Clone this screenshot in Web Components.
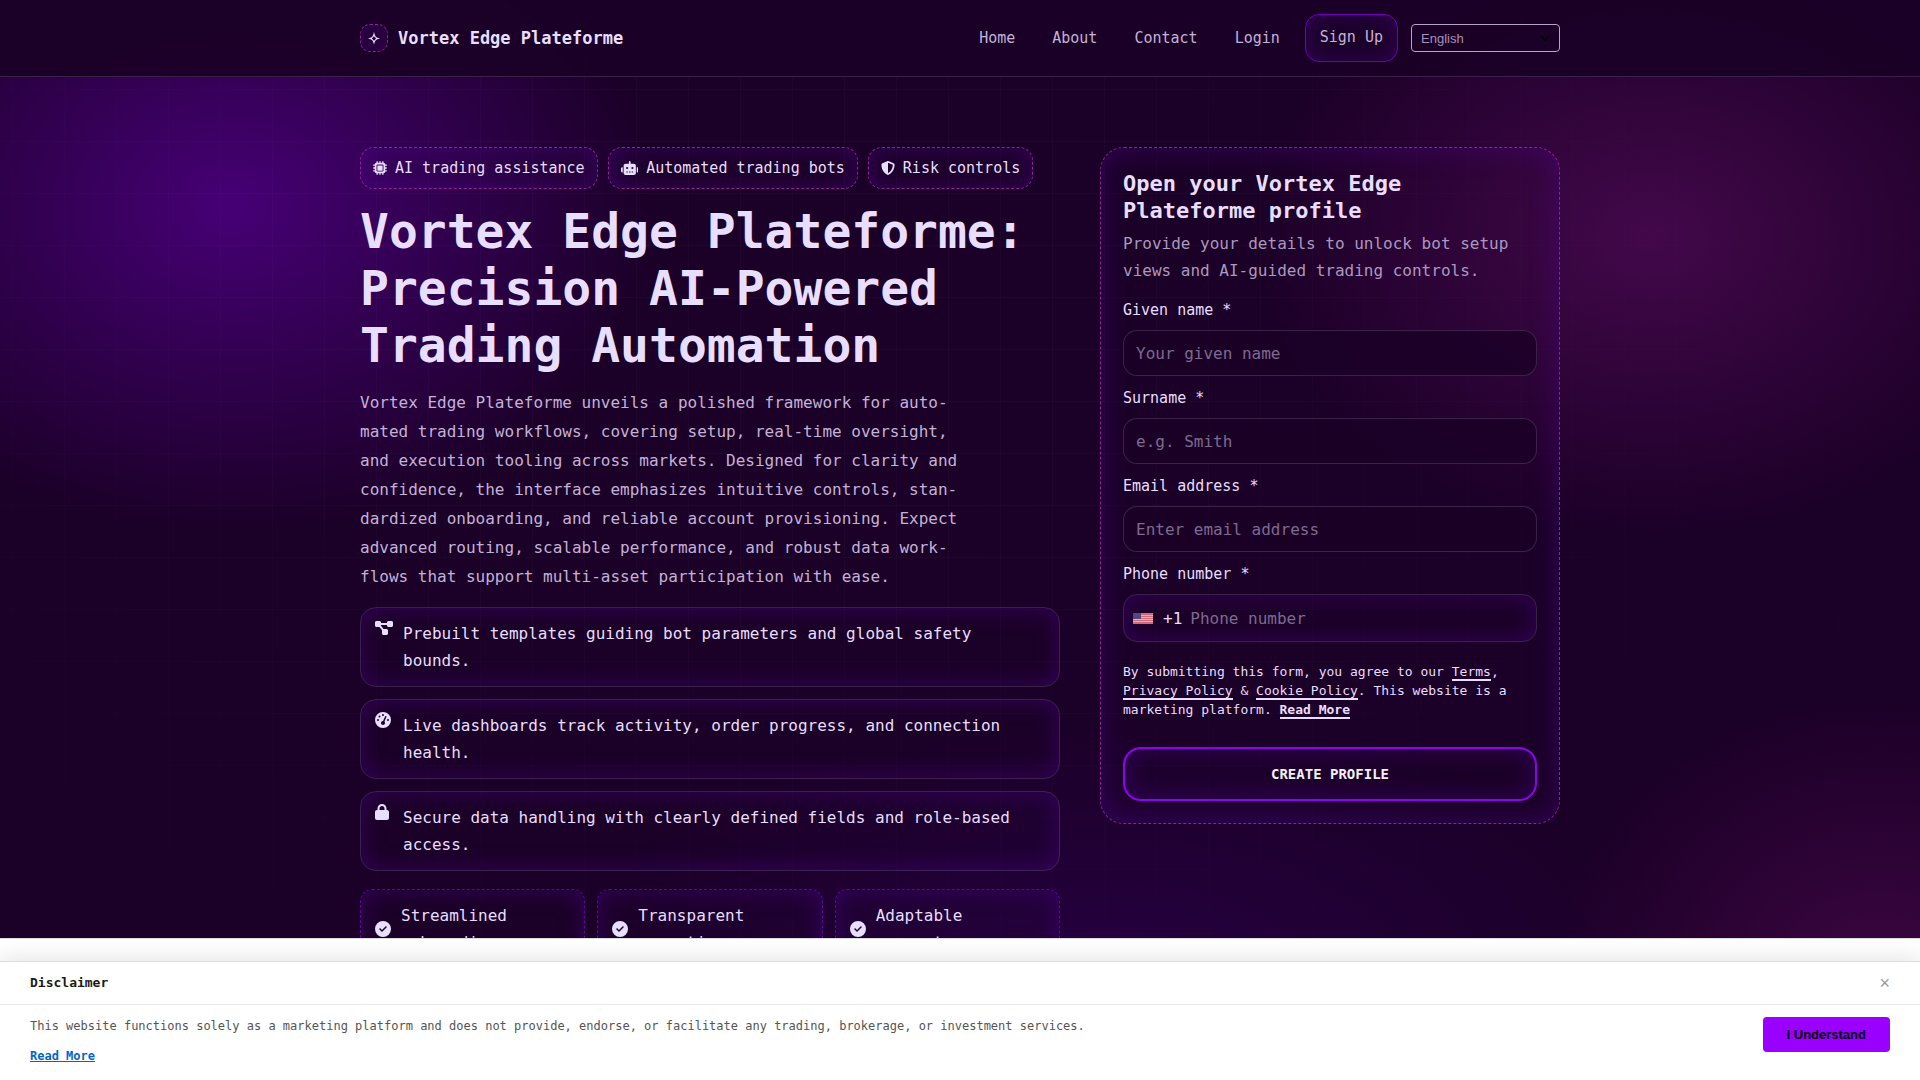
<!DOCTYPE html>
<html lang="en">
<head>
<meta charset="utf-8">
<meta name="viewport" content="width=device-width, initial-scale=1">
<title>Vortex Edge Plateforme</title>
<style>
  :root {
    --ink: #e8deff;
    --muted: #c3b2d8;
    --soft: #ab98bf;
    --hint: #7d6a90;
    --line: rgba(232, 222, 255, 0.15);
    --pink: #96209a;
    --violet: #9900ff;
    --base: #1b0027;
    --glow: inset 0 0 24px rgba(84, 0, 160, 0.42);
    --mono: "DejaVu Sans Mono", monospace;
    --sans: "Liberation Sans", Arial, sans-serif;
  }
  body {
    margin: 0;
    min-height: 100vh;
    overflow: hidden;
    color: var(--ink);
    font: 16px/27px var(--mono);
    background:
      radial-gradient(430px 330px at 12% 19%, rgba(80, 0, 135, 0.82), transparent),
      radial-gradient(400px 300px at 86% 22%, rgba(78, 10, 84, 0.78), transparent),
      radial-gradient(340px 300px at 98% 92%, rgba(74, 8, 76, 0.72), transparent),
      radial-gradient(560px 260px at 58% 90%, rgba(52, 0, 98, 0.42), transparent),
      var(--base);
  }
  /* faint grid that fades out towards the edges */
  body::before {
    content: "";
    position: absolute;
    inset: 0;
    z-index: -1;
    background:
      linear-gradient(90deg, rgba(200, 160, 255, 0.03) 1px, transparent 1px) 12px 0 / 52px 52px,
      linear-gradient(rgba(200, 160, 255, 0.03) 1px, transparent 1px) 0 37px / 52px 52px;
    mask-image: radial-gradient(ellipse at 40% 30%, #000 20%, transparent 75%);
  }
</style>
</head>
<body>

<site-header>
  <nav-link href="#home">Home</nav-link>
  <nav-link href="#about">About</nav-link>
  <nav-link href="#contact">Contact</nav-link>
  <nav-link href="#login">Login</nav-link>
  <nav-link href="#signup" outlined>Sign Up</nav-link>
</site-header>

<hero-section>
  <info-chip slot="chips" icon="chip">AI trading assistance</info-chip>
  <info-chip slot="chips" icon="robot">Automated trading bots</info-chip>
  <info-chip slot="chips" icon="shield">Risk controls</info-chip>

  <span slot="title">Vortex Edge Plateforme: Precision AI-Powered Trading Automation</span>
  <span slot="lead">Vortex Edge Plateforme unveils a polished framework for auto&shy;mated trading workflows, covering setup, real-time oversight, and execution tooling across markets. Designed for clarity and confidence, the interface emphasizes intuitive controls, stan&shy;dardized onboarding, and reliable account provisioning. Expect advanced routing, scalable performance, and robust data work&shy;flows that support multi-asset participation with ease.</span>

  <feature-item slot="features" icon="diagram">Prebuilt templates guiding bot parameters and global safety bounds.</feature-item>
  <feature-item slot="features" icon="gauge">Live dashboards track activity, order progress, and connection health.</feature-item>
  <feature-item slot="features" icon="lock">Secure data handling with clearly defined fields and role-based access.</feature-item>

  <check-tile slot="tiles">Streamlined onboarding</check-tile>
  <check-tile slot="tiles">Transparent operations</check-tile>
  <check-tile slot="tiles">Adaptable parameters</check-tile>

  <profile-form slot="form">
    <form-field label="Given name *" placeholder="Your given name"></form-field>
    <form-field label="Surname *" placeholder="e.g. Smith"></form-field>
    <form-field label="Email address *" type="email" placeholder="Enter email address"></form-field>
    <form-field label="Phone number *" type="tel" placeholder="Phone number" prefix="+1"></form-field>
  </profile-form>
</hero-section>

<disclaimer-bar>
  This website functions solely as a marketing platform and does not provide, endorse, or facilitate any trading, brokerage, or investment services.
</disclaimer-bar>

<script>
const icons = {
  chip: [512, "M176 24c0-13.3-10.7-24-24-24s-24 10.7-24 24V64c-35.3 0-64 28.7-64 64H24c-13.3 0-24 10.7-24 24s10.7 24 24 24H64v56H24c-13.3 0-24 10.7-24 24s10.7 24 24 24H64v56H24c-13.3 0-24 10.7-24 24s10.7 24 24 24H64c0 35.3 28.7 64 64 64v40c0 13.3 10.7 24 24 24s24-10.7 24-24V448h56v40c0 13.3 10.7 24 24 24s24-10.7 24-24V448h56v40c0 13.3 10.7 24 24 24s24-10.7 24-24V448c35.3 0 64-28.7 64-64h40c13.3 0 24-10.7 24-24s-10.7-24-24-24H448V280h40c13.3 0 24-10.7 24-24s-10.7-24-24-24H448V176h40c13.3 0 24-10.7 24-24s-10.7-24-24-24H448c0-35.3-28.7-64-64-64V24c0-13.3-10.7-24-24-24s-24 10.7-24 24V64H280V24c0-13.3-10.7-24-24-24s-24 10.7-24 24V64H176V24zM160 128H352c17.7 0 32 14.3 32 32V352c0 17.7-14.3 32-32 32H160c-17.7 0-32-14.3-32-32V160c0-17.7 14.3-32 32-32zm192 32H160V352H352V160z"],
  robot: [640, "M320 0c17.7 0 32 14.3 32 32V96H472c39.8 0 72 32.2 72 72V440c0 39.8-32.2 72-72 72H168c-39.8 0-72-32.2-72-72V168c0-39.8 32.2-72 72-72H288V32c0-17.7 14.3-32 32-32zM208 384c-8.8 0-16 7.2-16 16s7.2 16 16 16h32c8.8 0 16-7.2 16-16s-7.2-16-16-16H208zm96 0c-8.8 0-16 7.2-16 16s7.2 16 16 16h32c8.8 0 16-7.2 16-16s-7.2-16-16-16H304zm96 0c-8.8 0-16 7.2-16 16s7.2 16 16 16h32c8.8 0 16-7.2 16-16s-7.2-16-16-16H400zM264 256a40 40 0 1 0 -80 0 40 40 0 1 0 80 0zm152 40a40 40 0 1 0 0-80 40 40 0 1 0 0 80zM48 224H64V416H48c-26.5 0-48-21.5-48-48V272c0-26.5 21.5-48 48-48zm544 0c26.5 0 48 21.5 48 48v96c0 26.5-21.5 48-48 48H576V224h16z"],
  shield: [512, "M256 0c4.6 0 9.2 1 13.4 2.9L457.7 82.8c22 9.3 38.4 31 38.3 57.2c-.5 99.2-41.3 280.7-213.6 363.2c-16.7 8-36.1 8-52.8 0C57.3 420.7 16.5 239.2 16 140c-.1-26.2 16.3-47.9 38.3-57.2L242.7 2.9C246.8 1 251.4 0 256 0zm0 66.8V444.8C394 378 431.1 230.1 432 141.4L256 66.8z"],
  diagram: [576, "M0 80C0 53.5 21.5 32 48 32h96c26.5 0 48 21.5 48 48V96H384V80c0-26.5 21.5-48 48-48h96c26.5 0 48 21.5 48 48v96c0 26.5-21.5 48-48 48H432c-26.5 0-48-21.5-48-48V160H192v16c0 1.7-.1 3.4-.3 5L272 288h96c26.5 0 48 21.5 48 48v96c0 26.5-21.5 48-48 48H272c-26.5 0-48-21.5-48-48V336c0-1.7 .1-3.4 .3-5L144 224H48c-26.5 0-48-21.5-48-48V80z"],
  gauge: [512, "M0 256a256 256 0 1 1 512 0A256 256 0 1 1 0 256zM288 96a32 32 0 1 0 -64 0 32 32 0 1 0 64 0zM256 416c35.3 0 64-28.7 64-64c0-17.4-6.9-33.1-18.1-44.6L366 161.7c5.3-12.1-.2-26.3-12.3-31.6s-26.3 .2-31.6 12.3L257.9 288c-.6 0-1.3 0-1.9 0c-35.3 0-64 28.7-64 64s28.7 64 64 64zM176 144a32 32 0 1 0 -64 0 32 32 0 1 0 64 0zM96 288a32 32 0 1 0 0-64 32 32 0 1 0 0 64zm352-32a32 32 0 1 0 -64 0 32 32 0 1 0 64 0z"],
  lock: [448, "M144 144v48H304V144c0-44.2-35.8-80-80-80s-80 35.8-80 80zM80 192V144C80 64.5 144.5 0 224 0s144 64.5 144 144v48h16c35.3 0 64 28.7 64 64V448c0 35.3-28.7 64-64 64H64c-35.3 0-64-28.7-64-64V256c0-35.3 28.7-64 64-64H80z"],
  check: [512, "M256 512A256 256 0 1 0 256 0a256 256 0 1 0 0 512zM369 209L241 337c-9.4 9.4-24.6 9.4-33.9 0l-64-64c-9.4-9.4-9.4-24.6 0-33.9s24.6-9.4 33.9 0l47 47L335 175c9.4-9.4 24.6-9.4 33.9 0s9.4 24.6 0 33.9z"],
};

const icon = name => {
  const [width, path] = icons[name];
  return `<svg viewBox="0 0 ${width} 512" fill="currentColor" aria-hidden="true"><path fill-rule="evenodd" d="${path}"/></svg>`;
};

customElements.define(
  "nav-link",
  class extends HTMLElement {
    constructor() {
      super();
      this.attachShadow({ mode: "open" });
      this.shadowRoot.innerHTML = `
    <style>
      :host { display: block; }
      a {
        display: block;
        padding: 8px 12px;
        color: var(--muted);
        font-size: 15px;
        line-height: 24px;
        text-decoration: none;
      }
      :host([outlined]) a {
        padding: 10px 14px 12px;
        border: 1px solid #6f00ba;
        border-radius: 14px;
        box-shadow: var(--glow);
      }
    </style>
    <a href="${this.getAttribute("href")}"><slot></slot></a>`;
    }
  }
);

customElements.define(
  "site-header",
  class extends HTMLElement {
    constructor() {
      super();
      this.attachShadow({ mode: "open" });
      this.shadowRoot.innerHTML = `
    <style>
      :host {
        display: block;
        background: rgba(27, 0, 38, 0.94);
        border-bottom: 1px solid var(--line);
      }
      header, nav, .brand {
        display: flex;
        align-items: center;
      }
      header {
        justify-content: space-between;
        max-width: 1200px;
        margin: 0 auto;
        padding: 14px 0;
      }
      .brand {
        gap: 10px;
        color: var(--ink);
        font-size: 17px;
        font-weight: bold;
        text-decoration: none;
      }
      .mark {
        display: grid;
        place-items: center;
        box-sizing: border-box;
        width: 28px;
        height: 28px;
        border: 1px dashed var(--pink);
        border-radius: 10px;
        background: #28003f;
      }
      .mark svg { width: 12px; height: 12px; }
      nav { gap: 13px; }
      .lang { display: grid; align-items: center; }
      select, .lang svg { grid-area: 1 / 1; }
      select {
        appearance: none;
        width: 149px;
        height: 28px;
        padding: 0 9px;
        border: 1px solid #b5a3ca;
        border-radius: 4px;
        background: transparent;
        color: #a591bb;
        font: 13px var(--sans);
      }
      .lang svg {
        justify-self: end;
        width: 10px;
        height: 8px;
        margin-right: 10px;
        pointer-events: none;
      }
    </style>
    <header>
      <a class="brand" href="#home">
        <span class="mark"><svg viewBox="0 0 12 12" fill="currentColor" aria-hidden="true"><path fill-rule="evenodd" d="M6 0Q6.800 3.800 8 5Q9 5.900 12 6.500Q9 7.100 8 8Q6.800 9.200 6 12.500Q5.200 9.200 4 8Q3 7.100 0 6.500Q3 5.900 4 5Q5.200 3.800 6 0zM6 4.200L3.900 6.500L6 8.800L8.100 6.500z"/></svg></span>
        Vortex Edge Plateforme
      </a>
      <nav>
        <slot></slot>
        <div class="lang">
          <select aria-label="Language"><option>English</option></select>
          <svg viewBox="0 0 10 8" fill="none" stroke="#08000c" stroke-width="2" aria-hidden="true"><path d="M1 2l4 4 4-4"/></svg>
        </div>
      </nav>
    </header>`;
    }
  }
);

customElements.define(
  "hero-section",
  class extends HTMLElement {
    constructor() {
      super();
      this.attachShadow({ mode: "open" });
      this.shadowRoot.innerHTML = `
    <style>
      :host { display: block; }
      main {
        display: grid;
        grid-template-columns: minmax(0, 35fr) minmax(0, 23fr);
        gap: 40px;
        align-items: start;
        max-width: 1200px;
        margin: 0 auto;
        padding: 70px 0;
      }
      .chips { display: flex; flex-wrap: wrap; gap: 10px; }
      h1 {
        margin: 14px 0;
        font-size: 48px;
        line-height: 57px;
      }
      p {
        max-width: 63ch;
        margin: 0 0 16px;
        color: var(--muted);
        line-height: 29px;
      }
      .features { display: grid; gap: 12px; }
      .tiles {
        display: grid;
        grid-template-columns: repeat(3, minmax(0, 1fr));
        gap: 12px;
        margin-top: 18px;
      }
    </style>
    <main>
      <section>
        <div class="chips"><slot name="chips"></slot></div>
        <h1><slot name="title"></slot></h1>
        <p><slot name="lead"></slot></p>
        <div class="features"><slot name="features"></slot></div>
        <div class="tiles"><slot name="tiles"></slot></div>
      </section>
      <slot name="form"></slot>
    </main>`;
    }
  }
);

customElements.define(
  "info-chip",
  class extends HTMLElement {
    constructor() {
      super();
      this.attachShadow({ mode: "open" });
      this.shadowRoot.innerHTML = `
    <style>
      :host {
        display: flex;
        align-items: center;
        gap: 8px;
        padding: 8px 12px;
        border: 1px dashed var(--pink);
        border-radius: 14px;
        box-shadow: var(--glow);
        font-size: 15px;
        line-height: 24px;
      }
      svg { height: 14px; }
    </style>
    ${icon(this.getAttribute("icon"))}<span><slot></slot></span>`;
    }
  }
);

customElements.define(
  "feature-item",
  class extends HTMLElement {
    constructor() {
      super();
      this.attachShadow({ mode: "open" });
      this.shadowRoot.innerHTML = `
    <style>
      :host {
        display: grid;
        grid-template-columns: 18px 1fr;
        gap: 10px;
        align-items: start;
        padding: 12px 16px 12px 14px;
        border: 1px solid var(--line);
        border-radius: 16px;
        box-shadow: var(--glow);
      }
      svg { height: 16px; }
    </style>
    ${icon(this.getAttribute("icon"))}<span><slot></slot></span>`;
    }
  }
);

customElements.define(
  "check-tile",
  class extends HTMLElement {
    constructor() {
      super();
      this.attachShadow({ mode: "open" });
      this.shadowRoot.innerHTML = `
    <style>
      :host {
        display: flex;
        align-items: center;
        gap: 10px;
        padding: 12px 14px;
        border: 1px dashed #6200a4;
        border-radius: 12px;
        box-shadow: var(--glow);
      }
      svg { flex: none; height: 16px; }
    </style>
    ${icon("check")}<span><slot></slot></span>`;
    }
  }
);

customElements.define(
  "form-field",
  class extends HTMLElement {
    constructor() {
      super();
      const prefix = this.getAttribute("prefix");
      const flag = `
        <svg viewBox="0 0 20 11" aria-hidden="true">
          <path fill="#cf6c7c" d="M0 0h20v11H0z"/>
          <path stroke="#d9b3c3" d="M0 2.500h20M0 4.500h20M0 6.500h20M0 8.500h20"/>
          <path fill="#51477f" d="M0 0h8v6H0z"/>
        </svg>`;
      this.attachShadow({ mode: "open" });
      this.shadowRoot.innerHTML = `
    <style>
      :host { display: grid; gap: 8px; }
      label { font-size: 15px; line-height: 24px; }
      .box {
        display: flex;
        align-items: center;
        height: 44px;
        padding: 0 12px;
        border: 1px solid var(--line);
        border-radius: 14px;
        background: rgba(27, 0, 39, 0.85);
      }
      :host([prefix]) .box {
        height: 46px;
        padding: 0 9px;
        background: none;
        box-shadow: var(--glow);
      }
      svg { width: 20px; height: 11px; margin-right: 10px; }
      .code { margin-right: 8px; }
      input {
        flex: 1;
        min-width: 0;
        padding: 0;
        border: 0;
        outline: 0;
        background: transparent;
        color: var(--ink);
        font: inherit;
      }
      input::placeholder { color: var(--hint); opacity: 1; }
    </style>
    <label for="control">${this.getAttribute("label")}</label>
    <div class="box">
      ${prefix ? `${flag}<span class="code">${prefix}</span>` : ""}
      <input id="control" type="${this.getAttribute("type") || "text"}" placeholder="${this.getAttribute("placeholder")}">
    </div>`;
    }
  }
);

customElements.define(
  "profile-form",
  class extends HTMLElement {
    constructor() {
      super();
      this.attachShadow({ mode: "open" });
      this.shadowRoot.innerHTML = `
    <style>
      :host {
        display: block;
        padding: 22px;
        border: 1px dashed var(--pink);
        border-radius: 24px;
        box-shadow: inset 0 0 28px rgba(84, 0, 160, 0.42);
      }
      h2 {
        margin: 0 0 6px;
        font-size: 22px;
        line-height: 27px;
      }
      p { margin: 0; }
      .sub { color: var(--soft); margin-bottom: 14px; }
      .fields { display: grid; gap: 10px; }
      .note {
        margin: 20px 0 28px;
        font-size: 13px;
        line-height: 19px;
      }
      a {
        color: inherit;
        text-decoration: none;
        border-bottom: 2px solid currentColor;
      }
      button {
        display: block;
        width: 100%;
        height: 54px;
        border: 2px solid #8f00ec;
        border-radius: 18px;
        background: transparent;
        box-shadow: var(--glow);
        color: #f2f0f4;
        font: bold 14px var(--mono);
      }
    </style>
    <form>
      <h2>Open your Vortex Edge Plateforme profile</h2>
      <p class="sub">Provide your details to unlock bot setup views and AI-guided trading controls.</p>
      <div class="fields"><slot></slot></div>
      <p class="note">By submitting this form, you agree to our <a href="#terms">Terms</a>, <a href="#privacy">Privacy Policy</a> &amp; <a href="#cookies">Cookie Policy</a>. This website is a <span>marketing platform.</span> <a href="#more"><b>Read More</b></a></p>
      <button type="button">CREATE PROFILE</button>
    </form>`;
    }
  }
);

customElements.define(
  "disclaimer-bar",
  class extends HTMLElement {
    constructor() {
      super();
      this.attachShadow({ mode: "open" });
      this.shadowRoot.innerHTML = `
    <style>
      :host {
        display: block;
        position: fixed;
        inset: auto 0 0;
        padding-top: 22px;
        border-top: 1px solid #ddd;
        background: #fff;
        color: #555;
        font-size: 12px;
        line-height: 18px;
      }
      section {
        border-top: 1px solid #ddd;
        background: #fff;
        box-shadow: 0 -4px 20px rgba(0, 0, 0, 0.1);
      }
      header, .body {
        display: flex;
        justify-content: space-between;
        align-items: center;
        padding: 12px 30px;
      }
      header { border-bottom: 1px solid #e8e8e8; }
      .body { align-items: start; padding-bottom: 15px; }
      h2 {
        margin: 0;
        color: #1a1a1a;
        font-size: 13px;
      }
      p { margin: 0 0 12px; }
      a { color: #0066cc; font-weight: bold; }
      button { border: 0; cursor: pointer; }
      .close {
        padding: 0;
        background: none;
        color: #999;
        font: 18px/18px var(--sans);
      }
      .accept {
        padding: 10px 24px;
        border-radius: 4px;
        background: var(--violet);
        color: #000;
        font: bold 13px/15px var(--sans);
      }
    </style>
    <section>
      <header>
        <h2>Disclaimer</h2>
        <button class="close" type="button" aria-label="Close">×</button>
      </header>
      <div class="body">
        <div>
          <p><slot></slot></p>
          <a href="#more">Read More</a>
        </div>
        <button class="accept" type="button">I Understand</button>
      </div>
    </section>`;
      this.shadowRoot.querySelectorAll("button").forEach(btn => {
        btn.addEventListener("click", () => this.remove());
      });
    }
  }
);
</script>
</body>
</html>
